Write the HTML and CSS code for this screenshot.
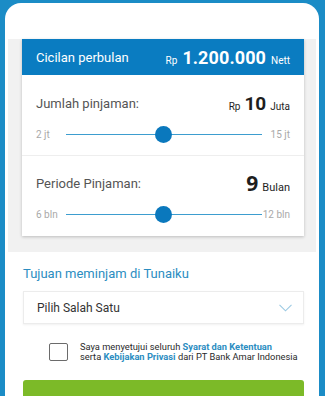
FILE: index.html
```html
<!DOCTYPE html>
<html lang="id">
<head>
<meta charset="utf-8">
<title>Tunaiku</title>
<link rel="stylesheet" href="styles.css">
</head>
<body>
<div class="panel">
  <div class="grey">
    <div class="card">
      <div class="card-head">
        <span class="head-label">Cicilan perbulan</span>
        <span class="head-value"><span class="small">Rp</span> <b class="big">1.200.000</b> <span class="small">Nett</span></span>
      </div>
      <div class="section">
        <div class="row">
          <span class="label">Jumlah pinjaman:</span>
          <span class="value"><span class="unit">Rp</span> <b class="num">10</b> <span class="unit">Juta</span></span>
        </div>
        <div class="slider">
          <span class="min">2 jt</span>
          <div class="track"><span class="thumb"></span></div>
          <span class="max">15 jt</span>
        </div>
      </div>
      <div class="section divided">
        <div class="row">
          <span class="label">Periode Pinjaman:</span>
          <span class="value"><b class="num num-lg">9</b> <span class="unit unit-lg">Bulan</span></span>
        </div>
        <div class="slider">
          <span class="min">6 bln</span>
          <div class="track"><span class="thumb"></span></div>
          <span class="max">12 bln</span>
        </div>
      </div>
    </div>
  </div>
  <div class="form">
    <h2 class="title">Tujuan meminjam di Tunaiku</h2>
    <div class="select">
      <span>Pilih Salah Satu</span>
      <svg class="chev" width="13" height="8" viewBox="0 0 13 8"><path d="M0.5 0.8 L6.5 6.8 L12.5 0.8" fill="none" stroke="#9cc9e3" stroke-width="1.1"/></svg>
    </div>
    <div class="agree">
      <span class="check"></span>
      <p class="agree-text">Saya menyetujui seluruh <a class="link">Syarat dan Ketentuan</a><br>serta <a class="link">Kebijakan Privasi</a> dari PT Bank Amar Indonesia</p>
    </div>
    <div class="button"></div>
  </div>
</div>
</body>
</html>
```
FILE: styles.css
```css
html, body {
  margin: 0;
  padding: 0;
}
body {
  background: #1b8cc6;
  font-family: Roboto, "Noto Sans", sans-serif;
  overflow: hidden;
  height: 396px;
}
.panel {
  margin: 3px 6px 0 5px;
  background: #ffffff;
  border-radius: 16px 16px 0 0;
  padding-top: 36px;
  min-height: 420px;
}
.grey {
  background: #f1f1f1;
  margin: 0 3px;
  padding: 0 12px 16px 14px;
}
.card {
  background: #ffffff;
  box-shadow: 0 1px 3px rgba(0, 0, 0, 0.22);
}
.card-head {
  height: 36px;
  background: #0a7cc1;
  color: #ffffff;
  display: flex;
  align-items: center;
  justify-content: space-between;
  padding: 0 14px;
}
.head-label {
  font-size: 13px;
}
.head-value {
  display: flex;
  align-items: baseline;
  gap: 5px;
}
.small {
  font-size: 10px;
}
.big {
  font-size: 18px;
  font-weight: 700;
  letter-spacing: 0.1px;
}
.section {
  padding: 18px 14px 12px;
}
.divided {
  border-top: 1px solid #eeeeee;
  padding-top: 17px;
  padding-bottom: 13px;
}
.row {
  height: 20px;
  display: flex;
  align-items: center;
  justify-content: space-between;
}
.label {
  font-size: 13px;
  color: #555555;
}
.value {
  display: flex;
  align-items: baseline;
  gap: 4px;
  color: #1e1e1e;
}
.unit {
  font-size: 10px;
}
.unit-lg {
  font-size: 11px;
}
.num {
  font-size: 19px;
  font-weight: 700;
}
.num-lg {
  font-size: 21px;
  font-family: "Open Sans", Roboto, sans-serif;
}
.slider {
  margin-top: 12px;
  height: 18px;
  display: grid;
  grid-template-columns: 30px 1fr 28px;
  align-items: center;
  font-size: 10px;
  color: #a9a9a9;
}
.max {
  text-align: right;
}
.track {
  position: relative;
  height: 1px;
  background: #3d9dcf;
}
.thumb {
  position: absolute;
  left: 49.5%;
  top: -8px;
  width: 17px;
  height: 17px;
  margin-left: -8px;
  border-radius: 50%;
  background: #0a78bd;
}
.form {
  padding: 14px 15px 0 18px;
}
.title {
  margin: 0;
  font-size: 13px;
  line-height: 16px;
  font-weight: 400;
  color: #2b8dc1;
}
.select {
  margin-top: 9px;
  height: 33px;
  box-sizing: border-box;
  background: #ffffff;
  border: 1px solid #ececec;
  box-shadow: 0 1px 2px rgba(0, 0, 0, 0.06);
  display: flex;
  align-items: center;
  justify-content: space-between;
  padding: 0 11px 0 13px;
  font-size: 12px;
  color: #333333;
}
.agree {
  margin-top: 18px;
  display: flex;
  align-items: center;
  padding-left: 26px;
}
.check {
  width: 19px;
  height: 18px;
  box-sizing: border-box;
  border: 1.5px solid #6b6b6b;
  border-radius: 2px;
  flex: none;
}
.agree-text {
  margin: 0 0 0 12px;
  font-size: 9.3px;
  line-height: 10px;
  color: #2a2a2a;
  white-space: nowrap;
}
.link {
  color: #2b8dc1;
  font-weight: 700;
}
.button {
  margin-top: 18px;
  height: 44px;
  background: #7cba28;
  border-radius: 3px;
}
```
